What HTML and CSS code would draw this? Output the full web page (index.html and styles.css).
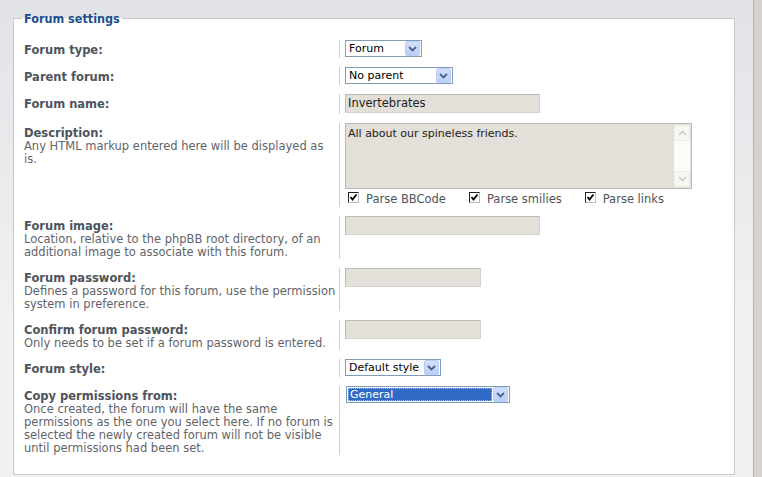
FILE: index.html
```html
<!DOCTYPE html>
<html>
<head>
<meta charset="utf-8">
<link rel="stylesheet" href="styles.css">
</head>
<body>
<div class="page">
  <fieldset class="settings">
    <legend>Forum settings</legend>

    <div class="row">
      <div class="dt"><label class="lbl">Forum type:</label></div>
      <div class="dd">
        <div class="select w-type"><span class="sel-text">Forum</span><span class="sel-btn"><svg width="9" height="6" viewBox="0 0 9 6"><path d="M1 1 L4.5 4.5 L8 1" fill="none" stroke="#4d6185" stroke-width="1.8"/></svg></span></div>
      </div>
    </div>

    <div class="row">
      <div class="dt"><label class="lbl">Parent forum:</label></div>
      <div class="dd">
        <div class="select w-parent"><span class="sel-text">No parent</span><span class="sel-btn"><svg width="9" height="6" viewBox="0 0 9 6"><path d="M1 1 L4.5 4.5 L8 1" fill="none" stroke="#4d6185" stroke-width="1.8"/></svg></span></div>
      </div>
    </div>

    <div class="row">
      <div class="dt"><label class="lbl">Forum name:</label></div>
      <div class="dd"><div class="input w-long">Invertebrates</div></div>
    </div>

    <div class="row">
      <div class="dt"><label class="lbl">Description:</label><span class="explain">Any HTML markup entered here will be displayed as is.</span></div>
      <div class="dd">
        <div class="textarea">
          <div class="ta-text">All about our spineless friends.</div>
          <div class="ta-scroll">
            <span class="ta-arrow"><svg width="9" height="6" viewBox="0 0 9 6"><path d="M1 5 L4.5 1.5 L8 5" fill="none" stroke="#cbcbc4" stroke-width="1.6"/></svg></span>
            <span class="ta-track"></span>
            <span class="ta-arrow"><svg width="9" height="6" viewBox="0 0 9 6"><path d="M1 1 L4.5 4.5 L8 1" fill="none" stroke="#cbcbc4" stroke-width="1.6"/></svg></span>
          </div>
        </div>
        <div class="checks">
          <label class="check"><span class="cb"><svg width="9" height="9" viewBox="0 0 9 9"><path d="M1.5 4 L3.5 6.5 L7.5 1.5" fill="none" stroke="#000" stroke-width="1.8"/></svg></span><span class="check-text">Parse BBCode</span></label>
          <label class="check"><span class="cb"><svg width="9" height="9" viewBox="0 0 9 9"><path d="M1.5 4 L3.5 6.5 L7.5 1.5" fill="none" stroke="#000" stroke-width="1.8"/></svg></span><span class="check-text">Parse smilies</span></label>
          <label class="check"><span class="cb"><svg width="9" height="9" viewBox="0 0 9 9"><path d="M1.5 4 L3.5 6.5 L7.5 1.5" fill="none" stroke="#000" stroke-width="1.8"/></svg></span><span class="check-text">Parse links</span></label>
        </div>
      </div>
    </div>

    <div class="row">
      <div class="dt"><label class="lbl">Forum image:</label><span class="explain">Location, relative to the phpBB root directory, of an additional image to associate with this forum.</span></div>
      <div class="dd"><div class="input w-long"></div></div>
    </div>

    <div class="row">
      <div class="dt"><label class="lbl">Forum password:</label><span class="explain">Defines a password for this forum, use the permission system in preference.</span></div>
      <div class="dd"><div class="input w-short"></div></div>
    </div>

    <div class="row">
      <div class="dt"><label class="lbl">Confirm forum password:</label><span class="explain">Only needs to be set if a forum password is entered.</span></div>
      <div class="dd"><div class="input w-short"></div></div>
    </div>

    <div class="row">
      <div class="dt"><label class="lbl">Forum style:</label></div>
      <div class="dd">
        <div class="select w-style"><span class="sel-text">Default style</span><span class="sel-btn"><svg width="9" height="6" viewBox="0 0 9 6"><path d="M1 1 L4.5 4.5 L8 1" fill="none" stroke="#4d6185" stroke-width="1.8"/></svg></span></div>
      </div>
    </div>

    <div class="row">
      <div class="dt"><label class="lbl">Copy permissions from:</label><span class="explain">Once created, the forum will have the same permissions as the one you select here. If no forum is selected the newly created forum will not be visible until permissions had been set.</span></div>
      <div class="dd">
        <div class="select w-perm focused"><span class="sel-text">General</span><span class="sel-btn"><svg width="9" height="6" viewBox="0 0 9 6"><path d="M1 1 L4.5 4.5 L8 1" fill="none" stroke="#4d6185" stroke-width="1.8"/></svg></span></div>
      </div>
    </div>
  </fieldset>
</div>
<div class="edge"></div>
</body>
</html>
```

FILE: styles.css
```css
html, body {
  margin: 0;
  height: 477px;
  overflow: hidden;
}
body {
  display: flex;
  font-family: "DejaVu Sans", Verdana, sans-serif;
  font-size: 11.5px;
  line-height: 13px;
}
.page {
  flex: 1;
  min-width: 0;
  background: linear-gradient(#e1e3e7, #f1f1f1 320px);
}
.edge {
  width: 8px;
  border-left: 1px solid #b4b4b4;
  background: #d6d3ce;
}
.settings {
  margin: 11px 18px 0 13px;
  padding: 10px 0 15px;
  border: 1px solid #c8c8c8;
  background: #fff;
  min-width: 0;
}
.settings legend {
  margin-left: 8px;
  padding: 1px 2px 0;
  font-family: "DejaVu Sans Condensed", "DejaVu Sans", sans-serif;
  font-weight: bold;
  font-size: 12.5px;
  line-height: 13px;
  color: #1b4f8e;
}
.row {
  display: grid;
  grid-template-columns: 326px 1fr;
  padding: 5px 0;
}
.dt {
  box-sizing: border-box;
  padding: 4px 0 0 10px;
  margin-bottom: -1px;
  border-right: 1px solid #cfcfcf;
}
.lbl {
  display: block;
  font-weight: bold;
  color: #4d545c;
}
.explain {
  display: block;
  color: #5f646a;
}
.dd {
  padding-left: 5px;
}
.select {
  box-sizing: border-box;
  display: flex;
  align-items: center;
  height: 17px;
  border: 1px solid #7f9db9;
  background: #fff;
  color: #000;
  font-size: 11px;
}
.sel-text {
  flex: 1;
  padding-left: 3px;
  white-space: nowrap;
}
.sel-btn {
  box-sizing: border-box;
  width: 15px;
  height: 15px;
  margin-right: 1px;
  display: flex;
  align-items: center;
  justify-content: center;
  border: 1px solid #bbcdf5;
  border-radius: 2px;
  background: linear-gradient(#d3e0fd, #b9cff9);
}
.w-type { width: 77px; }
.w-parent { width: 108px; }
.w-style { width: 96px; }
.w-perm { width: 164px; margin-left: 1px; }
.focused .sel-text {
  box-sizing: border-box;
  height: 13px;
  margin: 1px;
  padding-left: 1px;
  line-height: 11px;
  background: #316ac5;
  color: #fff;
  border: 1px dotted #a9bde4;
}
.input {
  box-sizing: border-box;
  height: 19px;
  border: 1px solid #bdb9b3;
  border-right-color: #d6d2cc;
  border-bottom-color: #d6d2cc;
  background: #e3dfd9;
  color: #222;
  padding: 2px 2px;
}
.w-long { width: 195px; }
.w-short { width: 136px; }
.textarea {
  box-sizing: border-box;
  display: flex;
  width: 347px;
  height: 66px;
  border: 1px solid #bdb9b3;
  background: #e3dfd9;
}
.ta-text {
  flex: 1;
  padding: 3px 2px;
  color: #222;
  font-size: 11px;
}
.ta-scroll {
  width: 16px;
  display: flex;
  flex-direction: column;
  background: #fbfbf8;
  margin: 1px 1px 1px 0;
}
.ta-arrow {
  box-sizing: border-box;
  height: 16px;
  display: flex;
  align-items: center;
  justify-content: center;
  background: #f8f8f3;
  border: 1px solid #ecebe4;
}
.ta-track {
  flex: 1;
}
.checks {
  display: flex;
  height: 17px;
  padding-left: 3px;
  color: #4f5358;
}
.check {
  display: flex;
  align-items: flex-start;
  margin-right: 23px;
}
.cb {
  box-sizing: border-box;
  width: 11px;
  height: 11px;
  margin: 3px 7px 0 0;
  display: flex;
  align-items: center;
  justify-content: center;
  background: #fff;
  border: 1px solid #222;
  border-right-color: #bbb;
  border-bottom-color: #bbb;
}
.check-text {
  padding-top: 4px;
}
```
